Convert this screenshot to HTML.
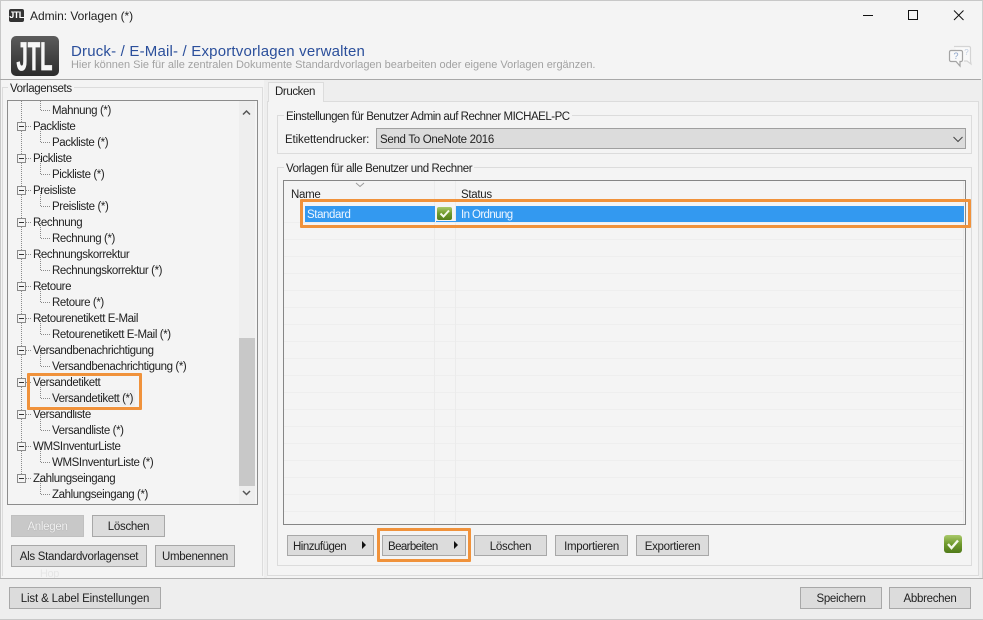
<!DOCTYPE html>
<html><head><meta charset="utf-8"><title>Admin: Vorlagen (*)</title>
<style>
html,body{margin:0;padding:0;width:983px;height:620px;overflow:hidden;background:#f4f4f4}
body{position:relative;font:11.5px/16px "Liberation Sans",sans-serif;color:#222}
.a{position:absolute;box-sizing:border-box}
.t{position:absolute;white-space:nowrap;line-height:16px;letter-spacing:-.4px;margin-top:1px}
.b{position:absolute;box-sizing:border-box;background:#dcdcdc;border:1px solid #a8a8a8;text-align:center;line-height:22px;white-space:nowrap;color:#222;letter-spacing:-.3px}
.o{position:absolute;box-sizing:border-box;border:3px solid #f0923b;border-radius:1px}
.g{position:absolute;box-sizing:border-box;border:1px solid #dcdcdc}
.ar{position:absolute;width:0;height:0;border-left:4px solid #111;border-top:4px solid transparent;border-bottom:4px solid transparent}
</style></head><body>
<div class="a" style="left:0;top:0;width:983px;height:620px;border:1px solid #c8c8c8;border-right-color:#d0d0d0"></div>

<!-- title bar -->
<div class="a" style="left:9px;top:9px;width:15px;height:13px;background:#333;border-radius:2px;color:#fff;font:bold 9px/13px 'Liberation Sans',sans-serif;text-align:center;letter-spacing:-.5px">JTL</div>
<div class="t" style="left:30px;top:7px;color:#222;font-size:12px;letter-spacing:-.05px">Admin: Vorlagen (*)</div>
<svg class="a" style="left:860px;top:5px" width="123" height="22" fill="none" stroke="#111" stroke-width="1">
<path d="M3 10.500H13"/><rect x="48.500" y="5.500" width="9" height="9"/><path d="M94 5.500l9.500 9.500M103.500 5.500L94 15"/></svg>

<!-- header -->
<div class="a" style="left:11px;top:36px;width:48px;height:40px;background:linear-gradient(#5c5c5c,#444 50%,#2c2c2c);border-radius:5px;overflow:hidden"></div>
<svg class="a" style="left:11px;top:36px" width="48" height="40"><text x="23.500" y="34" text-anchor="middle" font-family="Liberation Sans" font-weight="bold" font-size="40" fill="#f6f6f6" stroke="#f6f6f6" stroke-width=".8" textLength="36" lengthAdjust="spacingAndGlyphs">JTL</text></svg>
<div class="t" style="left:71px;top:42px;font-size:15px;line-height:18px;color:#2b4f9b;letter-spacing:.19px">Druck- / E-Mail- / Exportvorlagen verwalten</div>
<div class="t" style="left:71px;top:56px;font-size:11px;color:#a2a2a2;letter-spacing:-.02px">Hier können Sie für alle zentralen Dokumente Standardvorlagen bearbeiten oder eigene Vorlagen ergänzen.</div>
<svg class="a" style="left:947px;top:43px" width="26" height="26" fill="none">
<path d="M7 3.500h15a1.500 1.500 0 0 1 1.500 1.500v13l.5 3-4-3h-3" stroke="#d4d4d4" stroke-width="1.200" fill="#f9f9f9"/>
<path d="M4 7.500h10a1.500 1.500 0 0 1 1.500 1.500v8a1.500 1.500 0 0 1-1.500 1.500h-1V23l-4-4.500H4A1.500 1.500 0 0 1 2.500 17V9A1.500 1.500 0 0 1 4 7.500z" stroke="#a4a4a4" stroke-width="1.200" fill="#f9f9f9"/>
<text x="9" y="16" font-family="Liberation Sans" font-size="9" fill="#8aa2c8" text-anchor="middle">?</text>
<text x="19.500" y="12" font-family="Liberation Sans" font-size="8" fill="#c0cde0" text-anchor="middle">?</text></svg>
<div class="a" style="left:0;top:79px;width:981px;height:1px;background:#a8a8a8"></div>

<!-- background band of right/left area -->
<div class="a" style="left:264px;top:80px;width:718px;height:21px;background:#eeeeee"></div>
<div class="a" style="left:979px;top:101px;width:3px;height:477px;background:#eeeeee"></div>
<div class="a" style="left:264px;top:101px;width:3px;height:477px;background:#eeeeee"></div>

<!-- left group -->
<div class="g" style="left:2px;top:87px;width:261px;height:489px;border-bottom:0"></div>
<div class="t" style="left:8px;top:80px;background:#f4f4f4;padding:0 2px">Vorlagensets</div>
<div class="a" style="left:7px;top:100px;width:251px;height:405px;border:1px solid #8c8c8c;background:#f4f4f4"></div>
<div class="a" style="left:239px;top:101px;width:16px;height:403px;background:#eeeeee"></div>
<div class="a" style="left:239px;top:338px;width:16px;height:148px;background:#c8c8c8"></div>
<svg class="a" style="left:239px;top:101px" width="16" height="403" fill="none" stroke="#555" stroke-width="1.500"><path d="M4 13.500l3.500-3.500 3.500 3.500"/><path d="M4 390l3.500 3.500 3.500-3.500"/></svg>

<!-- tree lines -->
<svg class="a" style="left:8px;top:101px" width="230" height="402" fill="none" stroke="#8a8a8a" stroke-width="1" stroke-dasharray="1 1" shape-rendering="crispEdges">
<path d="M13.500 0V377"/>
<path d="M32.500 0V9.500H42M32.500 26V41.500H42M32.500 58V73.500H42M32.500 90V105.500H42M32.500 122V137.500H42M32.500 154V169.500H42M32.500 186V201.500H42M32.500 218V233.500H42M32.500 250V265.500H42M32.500 282V297.500H42M32.500 314V329.500H42M32.500 346V361.500H42M32.500 378V393.500H42"/>
<path d="M18 25.500H24M18 57.500H24M18 89.500H24M18 121.500H24M18 153.500H24M18 185.500H24M18 217.500H24M18 249.500H24M18 281.500H24M18 313.500H24M18 345.500H24M18 377.500H24"/>
</svg>
<svg class="a" style="left:17px;top:101px" width="9" height="390" shape-rendering="crispEdges">
<defs><g id="x"><rect x=".5" y=".5" width="8" height="8" fill="#f4f4f4" stroke="#8a8a8a"/><path d="M2 4.500H7" stroke="#333"/></g></defs>
<use href="#x" y="21"/><use href="#x" y="53"/><use href="#x" y="85"/><use href="#x" y="117"/><use href="#x" y="149"/><use href="#x" y="181"/><use href="#x" y="213"/><use href="#x" y="245"/><use href="#x" y="277"/><use href="#x" y="309"/><use href="#x" y="341"/><use href="#x" y="373"/></svg>
<div class="a" style="left:50px;top:390px;width:85px;height:16px;background:#eeeeee"></div>

<!-- tree text -->
<div class="t" style="left:52px;top:102px">Mahnung (*)</div>
<div class="t" style="left:33px;top:118px">Packliste</div>
<div class="t" style="left:52px;top:134px">Packliste (*)</div>
<div class="t" style="left:33px;top:150px">Pickliste</div>
<div class="t" style="left:52px;top:166px">Pickliste (*)</div>
<div class="t" style="left:33px;top:182px">Preisliste</div>
<div class="t" style="left:52px;top:198px">Preisliste (*)</div>
<div class="t" style="left:33px;top:214px">Rechnung</div>
<div class="t" style="left:52px;top:230px">Rechnung (*)</div>
<div class="t" style="left:33px;top:246px">Rechnungskorrektur</div>
<div class="t" style="left:52px;top:262px">Rechnungskorrektur (*)</div>
<div class="t" style="left:33px;top:278px">Retoure</div>
<div class="t" style="left:52px;top:294px">Retoure (*)</div>
<div class="t" style="left:33px;top:310px">Retourenetikett E-Mail</div>
<div class="t" style="left:52px;top:326px">Retourenetikett E-Mail (*)</div>
<div class="t" style="left:33px;top:342px">Versandbenachrichtigung</div>
<div class="t" style="left:52px;top:358px">Versandbenachrichtigung (*)</div>
<div class="t" style="left:33px;top:374px">Versandetikett</div>
<div class="t" style="left:52px;top:390px">Versandetikett (*)</div>
<div class="t" style="left:33px;top:406px">Versandliste</div>
<div class="t" style="left:52px;top:422px">Versandliste (*)</div>
<div class="t" style="left:33px;top:438px">WMSInventurListe</div>
<div class="t" style="left:52px;top:454px">WMSInventurListe (*)</div>
<div class="t" style="left:33px;top:470px">Zahlungseingang</div>
<div class="t" style="left:52px;top:486px">Zahlungseingang (*)</div>
<div class="o" style="left:27px;top:373px;width:115px;height:37px"></div>

<!-- left buttons -->
<div class="b" style="left:11px;top:515px;width:73px;height:22px;background:#c8c8c8;border-color:#c0c0c0;color:#f2f2f2;text-shadow:0 0 1px #999">Anlegen</div>
<div class="b" style="left:92px;top:515px;width:73px;height:22px">Löschen</div>
<div class="b" style="left:11px;top:545px;width:136px;height:22px">Als Standardvorlagenset</div>
<div class="b" style="left:155px;top:545px;width:80px;height:22px">Umbenennen</div>
<div class="t" style="left:40px;top:565px;color:#e6e6e6;font-size:11px">Hop</div>

<!-- tab panel -->
<div class="a" style="left:267px;top:101px;width:712px;height:475px;border:1px solid #dcdcdc;background:#f4f4f4"></div>
<div class="a" style="left:268px;top:82px;width:56px;height:20px;border:1px solid #dcdcdc;border-bottom:0;background:#f4f4f4"></div>
<div class="t" style="left:275px;top:83px">Drucken</div>

<!-- group 1 -->
<div class="g" style="left:277px;top:115px;width:695px;height:39px"></div>
<div class="t" style="left:284px;top:108px;background:#f4f4f4;padding:0 2px;letter-spacing:-.48px">Einstellungen für Benutzer Admin auf Rechner MICHAEL-PC</div>
<div class="t" style="left:285px;top:131px;letter-spacing:-.12px">Etikettendrucker:</div>
<div class="a" style="left:376px;top:128px;width:590px;height:21px;background:#dcdcdc;border:1px solid #a0a0a0"></div>
<div class="t" style="left:380px;top:131px;letter-spacing:-.3px">Send To OneNote 2016</div>
<svg class="a" style="left:951px;top:135px" width="14" height="9" fill="none" stroke="#444"><path d="M2.500 2l4.500 4.500L11.500 2"/></svg>

<!-- group 2 -->
<div class="g" style="left:277px;top:167px;width:695px;height:399px"></div>
<div class="t" style="left:284px;top:160px;background:#f4f4f4;padding:0 2px">Vorlagen für alle Benutzer und Rechner</div>
<div class="a" style="left:283px;top:180px;width:683px;height:345px;border:1px solid #868686;background:#f4f4f4"></div>
<div class="a" style="left:284px;top:222px;width:680px;height:302px;background:repeating-linear-gradient(#eeeeee 0,#eeeeee 1px,transparent 1px,transparent 17px)"></div>
<div class="a" style="left:434px;top:181px;width:1px;height:343px;background:#ebebeb"></div>
<div class="a" style="left:455px;top:181px;width:1px;height:343px;background:#ebebeb"></div>
<div class="a" style="left:963px;top:181px;width:1px;height:343px;background:#ebebeb"></div>
<svg class="a" style="left:355px;top:182px" width="12" height="6" fill="none" stroke="#9a9a9a"><path d="M1 1l4 3.500L9 1"/></svg>
<div class="t" style="left:291px;top:186px;letter-spacing:-.3px">Name</div>
<div class="t" style="left:461px;top:186px;letter-spacing:-.3px">Status</div>
<div class="a" style="left:305px;top:206px;width:130px;height:16px;background:#3399f0"></div>
<div class="a" style="left:456px;top:206px;width:508px;height:16px;background:#3399f0"></div>
<div class="a" style="left:436px;top:221px;width:20px;height:1px;background:#3399f0"></div>
<div class="t" style="left:307px;top:206px;color:#eef6ff">Standard</div>
<div class="t" style="left:461px;top:206px;color:#eef6ff;letter-spacing:-.6px">In Ordnung</div>
<svg class="a" style="left:437px;top:207px" width="15" height="13"><defs><linearGradient id="gr" x1="0" y1="0" x2="0" y2="1"><stop offset="0" stop-color="#a9c96a"/><stop offset=".5" stop-color="#6f9a2c"/><stop offset="1" stop-color="#557f1c"/></linearGradient></defs><rect width="15" height="13" rx="2" fill="url(#gr)"/><path d="M3.500 6.500l3 3 5.500-6" fill="none" stroke="#f4f8e8" stroke-width="2"/></svg>
<div class="o" style="left:300px;top:199px;width:671px;height:29px"></div>

<!-- right buttons -->
<div class="b" style="left:287px;top:535px;width:87px;height:21px;text-align:left;padding-left:5px;letter-spacing:-.5px">Hinzufügen</div><div class="ar" style="left:362px;top:541px"></div>
<div class="b" style="left:382px;top:535px;width:84px;height:21px;text-align:left;padding-left:5px;letter-spacing:-.6px">Bearbeiten</div><div class="ar" style="left:454px;top:541px"></div>
<div class="b" style="left:474px;top:535px;width:73px;height:21px">Löschen</div>
<div class="b" style="left:555px;top:535px;width:73px;height:21px">Importieren</div>
<div class="b" style="left:636px;top:535px;width:73px;height:21px">Exportieren</div>
<div class="o" style="left:377px;top:528px;width:94px;height:34px"></div>
<svg class="a" style="left:944px;top:535px" width="18" height="18"><defs><linearGradient id="gr2" x1="0" y1="0" x2="0" y2="1"><stop offset="0" stop-color="#a9c96a"/><stop offset=".5" stop-color="#6f9a2c"/><stop offset="1" stop-color="#507a1a"/></linearGradient></defs><rect width="18" height="18" rx="3" fill="url(#gr2)"/><path d="M4 9l3.500 4L14 5.500" fill="none" stroke="#f4f8e8" stroke-width="2.400"/></svg>

<!-- footer -->
<div class="a" style="left:0;top:578px;width:983px;height:42px;background:#eeeeee;border-top:1px solid #b4b4b4"></div>
<div class="a" style="left:0;top:619px;width:983px;height:1px;background:#c8c8c8"></div>
<div class="b" style="left:9px;top:587px;width:152px;height:22px;letter-spacing:-.15px">List &amp; Label Einstellungen</div>
<div class="b" style="left:800px;top:587px;width:82px;height:22px">Speichern</div>
<div class="b" style="left:889px;top:587px;width:82px;height:22px">Abbrechen</div>
</body></html>
